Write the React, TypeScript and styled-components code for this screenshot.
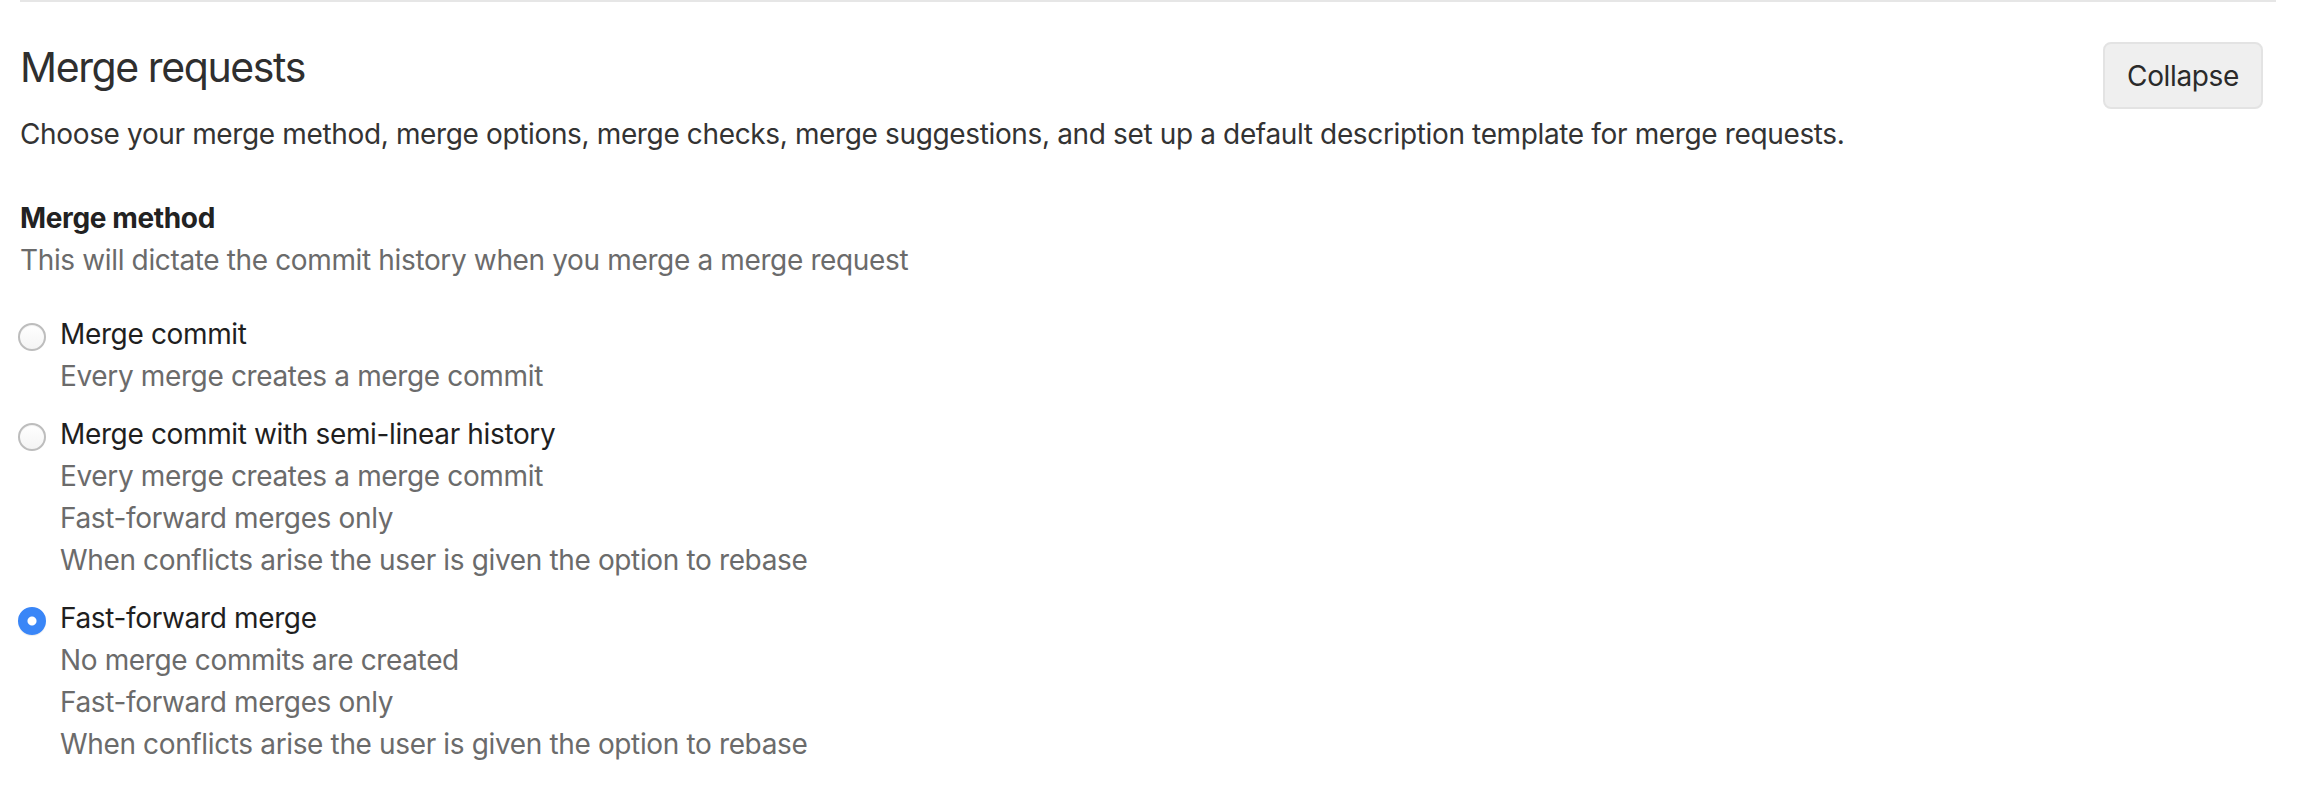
import React, { useState } from "react";
import styled, { createGlobalStyle } from "styled-components";

const GlobalStyle = createGlobalStyle`
  html, body {
    margin: 0;
    padding: 0;
    background: #ffffff;
  }
  body {
    font-family: Inter, "Noto Sans", "Liberation Sans", sans-serif;
    letter-spacing: -0.36px;
    -webkit-font-smoothing: antialiased;
  }
`;

interface MergeMethod {
  id: string;
  label: string;
  help: string[];
}

const methods: MergeMethod[] = [
  {
    id: "merge",
    label: "Merge commit",
    help: ["Every merge creates a merge commit"],
  },
  {
    id: "rebase_merge",
    label: "Merge commit with semi-linear history",
    help: [
      "Every merge creates a merge commit",
      "Fast-forward merges only",
      "When conflicts arise the user is given the option to rebase",
    ],
  },
  {
    id: "ff",
    label: "Fast-forward merge",
    help: [
      "No merge commits are created",
      "Fast-forward merges only",
      "When conflicts arise the user is given the option to rebase",
    ],
  },
];

const App = () => {
  const [method, setMethod] = useState("ff");

  return (
    <Page>
      <GlobalStyle />
      <Section>
        <Header>
          <HeaderText>
            <Title>Merge requests</Title>
            <Description>
              Choose your merge method, merge options, merge checks, merge suggestions, and set up a
              default description template for merge requests.
            </Description>
          </HeaderText>
          <CollapseButton type="button">Collapse</CollapseButton>
        </Header>

        <Fieldset>
          <Legend>Merge method</Legend>
          <Help>This will dictate the commit history when you merge a merge request</Help>

          <Options>
            {methods.map((m) => (
              <Option key={m.id}>
                <Radio
                  type="radio"
                  name="merge_method"
                  checked={method === m.id}
                  onChange={() => setMethod(m.id)}
                />
                <OptionText>
                  <OptionLabel>{m.label}</OptionLabel>
                  {m.help.map((line, i) => (
                    <Help key={i}>{line}</Help>
                  ))}
                </OptionText>
              </Option>
            ))}
          </Options>
        </Fieldset>
      </Section>
    </Page>
  );
};

const Page = styled.div`
  padding: 0 28px 0 20px;
`;

const Section = styled.section`
  border-top: 2px solid #e6e6e6;
  padding-top: 40px;
`;

const Header = styled.div`
  display: flex;
  justify-content: space-between;
  align-items: flex-start;
  padding-right: 13px;
`;

const HeaderText = styled.div`
  display: flex;
  flex-direction: column;
`;

const Title = styled.h2`
  margin: 0 0 21px;
  font-size: 41px;
  line-height: 50px;
  font-weight: 400;
  letter-spacing: -1.4px;
  color: #2f2f2f;
`;

const Description = styled.p`
  margin: 0;
  font-size: 28px;
  line-height: 42px;
  color: #333333;
`;

const CollapseButton = styled.button`
  height: 67px;
  padding: 0 22px;
  border: 2px solid #e3e3e3;
  border-radius: 8px;
  background: #efefef;
  font-family: inherit;
  font-size: 28px;
  letter-spacing: -0.36px;
  color: #2a2a2a;
  cursor: pointer;
`;

const Fieldset = styled.div`
  margin-top: 42px;
`;

const Legend = styled.div`
  font-size: 28px;
  line-height: 42px;
  font-weight: 700;
  color: #222222;
`;

const Help = styled.div`
  font-size: 28px;
  line-height: 42px;
  color: #6b6b6b;
`;

const Options = styled.div`
  display: flex;
  flex-direction: column;
  gap: 16px;
  margin-top: 32px;
`;

const Option = styled.label`
  display: flex;
  align-items: flex-start;
  gap: 14px;
  cursor: pointer;
`;

const Radio = styled.input`
  appearance: none;
  -webkit-appearance: none;
  flex: none;
  width: 28px;
  height: 28px;
  margin: 10px 0 0 -2px;
  border-radius: 50%;
  border: 2px solid #bdbdbd;
  background: linear-gradient(#ffffff, #f4f4f4);
  box-shadow: inset 0 1px 1px rgba(0, 0, 0, 0.05);
  cursor: pointer;

  &:checked {
    border-color: #3a86f7;
    background: radial-gradient(circle, #ffffff 0 4px, #3a86f7 5px);
    box-shadow: 0 1px 1px rgba(0, 0, 0, 0.08);
  }
`;

const OptionText = styled.div`
  display: flex;
  flex-direction: column;
`;

const OptionLabel = styled.div`
  font-size: 28px;
  line-height: 42px;
  color: #1f1f1f;
`;

export default App;
